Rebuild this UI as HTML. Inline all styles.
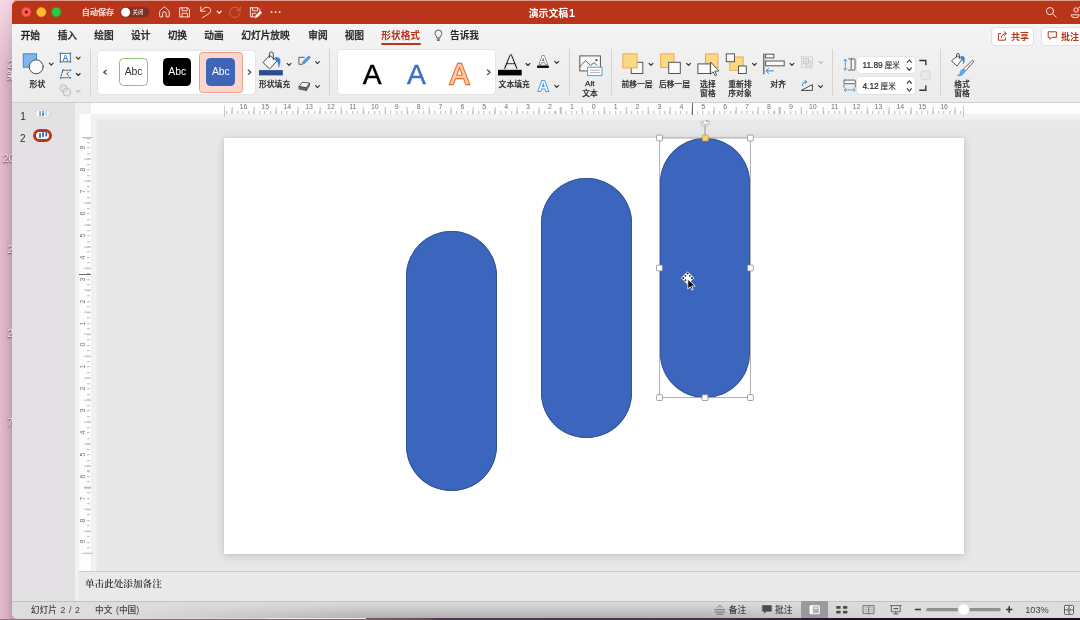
<!DOCTYPE html>
<html lang="zh-CN">
<head>
<meta charset="utf-8">
<title>演示文稿1</title>
<style>
rect{stroke-linejoin:miter}
html,body{margin:0;padding:0}
body{width:1080px;height:620px;overflow:hidden;position:relative;background:#e3b9cb;font-family:"Liberation Sans","Noto Sans CJK SC",sans-serif;color:#262626}
.a{position:absolute}
svg{position:absolute;overflow:visible}
.t{position:absolute;white-space:nowrap;line-height:1}
/* desktop */
#desk{left:0;top:0;width:1080px;height:620px;background:linear-gradient(to right,#e4bacc 0px,#dab2c4 5px,#c8a3b5 11px,#c09bad 12px)}
#deskbottom{left:366px;top:617.7px;width:714px;height:2.3px;background:linear-gradient(to right,#765a62 0,#6a4a54 60px,#4a3850 75px,#43334d 334px,#2a1d33 434px,#1a1022 484px,#150d1c 714px)}
.dl{color:#ebe5e8;font-size:10.2px;text-shadow:0 .6px 1.6px rgba(50,25,40,.85)}
/* window */
#win{will-change:transform;left:0;top:0;width:1080px;height:620px;clip-path:inset(1px -30px 1.3px 12px round 5px);background:#ececec}
#titlebar{left:0;top:0;width:1080px;height:23.5px;background:#b93519}
#tabs{left:0;top:23.5px;width:1080px;height:78px;background:linear-gradient(to bottom,#f4f4f4,#ebebeb)}
#ribbon{left:0;top:47px;width:1080px;height:55px}
#ribbonline{left:0;top:102px;width:1080px;height:1px;background:#cfcfcf}
.tab{font-size:9.7px;font-weight:500;color:#262626;top:30.6px;-webkit-text-stroke-width:.28px}
.lbl{font-size:7.8px;color:#262626;font-weight:500;-webkit-text-stroke-width:.15px}
.sep{width:1px;background:#d4d4d4;top:49px;height:46px}
.gal{background:#fff;border-radius:3px;box-shadow:0 0 0 0.5px #dcdcdc}

.rl{font-size:7px;color:#737373}
.vr{transform:rotate(-90deg);transform-origin:50% 50%}
.shp{background:#3c66bd;border-radius:46px;box-shadow:inset 0 0 0 .8px #2f528f}
#hruler{left:90.6px;top:103px;width:990px;height:11.4px;background:#fdfdfd}
#hticks{left:224.6px;top:103px;width:738.4px;height:11.4px;
 background-image:repeating-linear-gradient(to right,#bdbdbd 0,#bdbdbd 1px,transparent 1px,transparent 21.9px),repeating-linear-gradient(to right,#bdbdbd 0,#bdbdbd 1px,transparent 1px,transparent 5.475px);
 background-size:100% 7px,100% 3.5px;background-position:6.70px 100%,1.23px 100%;background-repeat:repeat-x}
#vruler{left:78.8px;top:114.3px;width:11.8px;height:457px;background:#fdfdfd}
#vticks{left:78.8px;top:138.4px;width:11.8px;height:414.80000000000007px;
 background-image:repeating-linear-gradient(to bottom,#bdbdbd 0,#bdbdbd 1px,transparent 1px,transparent 21.9px),repeating-linear-gradient(to bottom,#bdbdbd 0,#bdbdbd 1px,transparent 1px,transparent 5.475px);
 background-size:7px 100%,3.4px 100%;background-position:100% 20.65px,100% 4.22px;background-repeat:repeat-y}
.st{font-size:8.7px;color:#414141;font-weight:500;top:606.3px;word-spacing:1.2px}
</style>
</head>
<body>
<div class="a" id="desk"></div>
<div class="a" style="left:0;top:0;width:1080px;height:80px;background:linear-gradient(to bottom,rgba(255,226,236,.75) 0,rgba(255,226,236,.55) 18px,rgba(255,226,236,0) 75px)"></div>
<div class="a" style="left:14px;top:0;width:1066px;height:1px;background:#dc9c8e"></div>
<div class="a" style="left:0;top:0;width:40px;height:620px;will-change:transform">
<div class="t dl" style="left:7.7px;top:59.8px">2020</div>
<div class="t dl" style="left:6.3px;top:71.4px">第一</div>
<div class="t dl" style="left:2.8px;top:153.6px">2020</div>
<div class="t dl" style="left:7.8px;top:245.2px">2020</div>
<div class="t dl" style="left:7.6px;top:329px">2020</div>
<div class="t dl" style="left:7.2px;top:417.8px">7月</div>
</div>

<div class="a" id="win">
<!-- TITLEBAR -->
<div class="a" id="titlebar"></div>
<svg style="left:0;top:0" width="1080" height="24" viewBox="0 0 1080 24" fill="none" stroke="#fbe9e4" stroke-width=".95" stroke-linecap="round" stroke-linejoin="round">
<circle cx="26.3" cy="12.1" r="4.7" fill="#fe5f57" stroke="#e2463d" stroke-width=".5"/><circle cx="26.3" cy="12.1" r="1.5" fill="#6e0d08" stroke="none"/>
<circle cx="41.3" cy="12.1" r="4.7" fill="#febc2e" stroke="#e0a028" stroke-width=".5"/>
<circle cx="56.3" cy="12.1" r="4.7" fill="#28c840" stroke="#1fa734" stroke-width=".5"/>
<rect x="120.3" y="7.2" width="29" height="10.2" rx="5.1" fill="#7a3022" stroke="none"/>
<circle cx="125.6" cy="12.3" r="4.5" fill="#fff" stroke="none"/>
<path d="M159.6 11.9 C159.6 11.2 160 10.8 160.4 10.4 L163.6 7.3 a1.1 1.1 0 0 1 1.6 0 L168.4 10.4 C168.8 10.8 169.2 11.2 169.2 11.9 V16.2 a.7 .7 0 0 1 -.7 .7 H166.2 V13.6 a1.8 1.8 0 0 0 -3.6 0 V16.9 H160.3 a.7 .7 0 0 1 -.7 -.7 Z"/>
<path d="M180 7.8 h7.6 l1.9 1.9 v7.2 h-9.5 z M182.2 7.8 v3 h5 v-3 M182 16.9 v-3.6 h5.6 v3.6"/>
<path d="M200.8 6.9 V11.2 H205.2 M201 11.1 C203 7.4 207 6.4 209.4 8 C211.4 9.500 211 12.1 209 13.600 L202.6 17.6"/>
<path d="M217.3 11.3 L219.2 13.3 L221.1 11.3" stroke-width="1.3"/>
<g opacity=".32"><path d="M239.6 10.2 A5.2 5.2 0 1 0 240 13.2 M240.2 6.8 V10.4 H236.6"/></g>
<path d="M250.4 7.8 h7.6 l1.9 1.9 v2.2 M250.4 7.8 v9.1 h4.2 M252.6 7.8 v3 h5 v-3 M252.4 16.9 v-3.6 h3.4"/>
<path d="M255.3 17.6 l.6 -2.2 l4.2 -4.2 l1.6 1.6 l-4.2 4.2 z" fill="#fff" stroke-width=".6"/>
<g fill="#fff" stroke="none"><circle cx="271.6" cy="12.1" r=".95"/><circle cx="275.6" cy="12.1" r=".95"/><circle cx="279.6" cy="12.1" r=".95"/></g>
<circle cx="1050" cy="11.1" r="3.6"/><path d="M1052.7 13.8 L1056.3 17.2"/>
<circle cx="1076" cy="10" r="2.2"/><path d="M1071.2 15.2 a4 2.6 0 0 0 8 0 z M1078.2 8.2 a2 2 0 0 1 1.8 -1.4"/>
</svg>
<div class="t" style="left:81.8px;top:8.6px;font-size:8.1px;font-weight:500;color:#fae3dd;-webkit-text-stroke:.2px #fae3dd">自动保存</div>
<div class="t" style="left:132.6px;top:9.6px;font-size:5.3px;font-weight:500;color:#f3dcd6">关闭</div>
<div class="t" style="left:528.7px;top:7.6px;font-size:9.9px;font-weight:700;color:#fff">演示文稿<span style="font-size:10.8px;margin-left:.8px">1</span></div>
<!-- TABS -->
<div class="a" id="tabs"></div>
<div class="t tab" style="left:20.7px">开始</div>
<div class="t tab" style="left:57.7px">插入</div>
<div class="t tab" style="left:94.3px">绘图</div>
<div class="t tab" style="left:131px">设计</div>
<div class="t tab" style="left:167.7px">切换</div>
<div class="t tab" style="left:204.3px">动画</div>
<div class="t tab" style="left:241.3px">幻灯片放映</div>
<div class="t tab" style="left:308.3px">审阅</div>
<div class="t tab" style="left:344.7px">视图</div>
<div class="t tab" style="left:381.3px;color:#b7361a;font-weight:700;-webkit-text-stroke-width:0">形状格式</div>
<div class="a" style="left:381.3px;top:43px;width:39.7px;height:2px;background:#b93519;border-radius:1px"></div>
<svg style="left:0;top:24px" width="1080" height="24" viewBox="0 24 1080 24" fill="none" stroke="#4a4a4a" stroke-width=".9" stroke-linecap="round" stroke-linejoin="round">
<path d="M436.9 37.6 c0 -1.4 -1.9 -2 -1.9 -4.2 a3.4 3.4 0 0 1 6.8 0 c0 2.2 -1.9 2.8 -1.9 4.2 z M437.1 39.2 h2.6 M437.6 40.5 h1.6"/>
</svg>
<div class="t tab" style="left:450px;font-weight:700;-webkit-text-stroke-width:0">告诉我</div>
<div class="a" style="left:991.7px;top:27.7px;width:41.5px;height:17px;background:#fff;border-radius:3px;box-shadow:0 0 0 .6px #d2d2d2"></div>
<div class="a" style="left:1041.7px;top:27.7px;width:50px;height:17px;background:#fff;border-radius:3px;box-shadow:0 0 0 .6px #d2d2d2"></div>
<svg style="left:0;top:24px" width="1080" height="24" viewBox="0 24 1080 24" fill="none" stroke="#b7361a" stroke-width="1" stroke-linecap="round" stroke-linejoin="round">
<path d="M1000.6 33.6 h-2.2 v6.6 h7 v-2.4 M1001.4 37.4 c.2 -2.6 1.8 -3.8 4.2 -3.8 M1004.2 31.6 l2.2 2 l-2.2 2"/>
<path d="M1048.6 31.8 h7.8 v5.6 h-4.4 l-2 2 v-2 h-1.4 z"/>
</svg>
<div class="t" style="left:1011px;top:33.3px;font-size:9px;font-weight:700;color:#b7361a">共享</div>
<div class="t" style="left:1061px;top:33.3px;font-size:9px;font-weight:700;color:#b7361a">批注</div>
<!-- RIBBON -->
<div class="a" id="ribbon"></div>
<div class="a sep" style="left:90px"></div>
<div class="a sep" style="left:329px"></div>
<div class="a sep" style="left:568.5px"></div>
<div class="a sep" style="left:611px"></div>
<div class="a sep" style="left:832px"></div>
<div class="a sep" style="left:940.3px"></div>
<div class="a gal" style="left:98.4px;top:50.7px;width:156.9px;height:43.1px"></div>
<div class="a gal" style="left:337.7px;top:50.4px;width:157.3px;height:43.3px"></div>
<div class="a" style="left:199.2px;top:52.1px;width:42px;height:39.2px;background:#fbd6cd;border:1px solid #ec9d8b;border-radius:3.5px;box-sizing:content-box"></div>
<div class="a" style="left:119.1px;top:57.8px;width:27px;height:26.6px;border:1px solid #90bf80;border-radius:4.5px;background:#fff"></div>
<div class="a" style="left:162.9px;top:57.8px;width:28.6px;height:28.6px;border-radius:4.5px;background:#000"></div>
<div class="a" style="left:206.4px;top:57.8px;width:28.9px;height:28.6px;border-radius:4.5px;background:#3f65b9"></div>
<div class="t" style="left:119.1px;width:29px;text-align:center;top:66.9px;font-size:10.4px;color:#333">Abc</div>
<div class="t" style="left:162.9px;width:28.6px;text-align:center;top:66.9px;font-size:10.4px;color:#fff">Abc</div>
<div class="t" style="left:206.4px;width:28.9px;text-align:center;top:66.9px;font-size:10.4px;color:#fff">Abc</div>
<div class="t" style="left:362.7px;top:60px;font-size:28.2px;color:#000;-webkit-text-stroke:.45px #000">A</div>
<div class="t" style="left:406.9px;top:60px;font-size:28.2px;color:#3f6fc6;-webkit-text-stroke:.45px #3f6fc6">A</div>
<div class="t" style="left:450px;top:60px;font-size:28.6px;color:#f9cdb0;-webkit-text-stroke:2.3px #e8722c;paint-order:stroke fill">A</div>
<svg style="left:0;top:44px;z-index:2" width="1080" height="60" viewBox="0 44 1080 60" fill="none" stroke="#4a4a4a" stroke-width="1" stroke-linecap="round" stroke-linejoin="round">
<path d="M49.35 63.20 l1.9 2 l1.9 -2" stroke="#333" stroke-width="1.15"/>
<path d="M76.35 57.20 l1.9 2 l1.9 -2" stroke="#333" stroke-width="1.15"/>
<path d="M76.35 73.50 l1.9 2 l1.9 -2" stroke="#333" stroke-width="1.15"/>
<path d="M287.15 63.40 l1.9 2 l1.9 -2" stroke="#333" stroke-width="1.15"/>
<path d="M315.55 61.60 l1.9 2 l1.9 -2" stroke="#333" stroke-width="1.15"/>
<path d="M315.55 85.70 l1.9 2 l1.9 -2" stroke="#333" stroke-width="1.15"/>
<path d="M526.05 63.50 l1.9 2 l1.9 -2" stroke="#333" stroke-width="1.15"/>
<path d="M554.75 61.40 l1.9 2 l1.9 -2" stroke="#333" stroke-width="1.15"/>
<path d="M554.75 85.40 l1.9 2 l1.9 -2" stroke="#333" stroke-width="1.15"/>
<path d="M649.05 63.40 l1.9 2 l1.9 -2" stroke="#333" stroke-width="1.15"/>
<path d="M686.65 63.40 l1.9 2 l1.9 -2" stroke="#333" stroke-width="1.15"/>
<path d="M752.55 63.40 l1.9 2 l1.9 -2" stroke="#333" stroke-width="1.15"/>
<path d="M790.05 63.40 l1.9 2 l1.9 -2" stroke="#333" stroke-width="1.15"/>
<path d="M818.65 85.70 l1.9 2 l1.9 -2" stroke="#333" stroke-width="1.15"/>
<path d="M76.35 90.10 l1.9 2 l1.9 -2" stroke="#bdbdbd" stroke-width="1.15"/>
<path d="M818.95 61.40 l1.9 2 l1.9 -2" stroke="#bdbdbd" stroke-width="1.15"/>
<!-- shapes -->
<rect x="23.3" y="53.8" width="13.2" height="13.4" fill="#7db7ee" stroke="#3e8ad8"/>
<circle cx="36.2" cy="66.8" r="7" fill="#f9f9f9" stroke="#4d4d4d"/>
<!-- text box -->
<rect x="60.4" y="53.4" width="10" height="8.4" fill="#fff" stroke="#6a6a6a"/>
<g fill="#2f8de0" stroke="none"><circle cx="60.4" cy="53.4" r="1"/><circle cx="70.4" cy="53.4" r="1"/><circle cx="60.4" cy="61.8" r="1"/><circle cx="70.4" cy="61.8" r="1"/></g>
<text x="65.4" y="60.800" font-size="8.2" font-weight="700" fill="#2f8de0" stroke="none" text-anchor="middle" font-family="Liberation Sans, sans-serif">A</text>
<!-- edit shape -->
<path d="M63.2 70.3 H70.3" stroke-dasharray="1.6 1.4" stroke="#555"/>
<path d="M62.6 71.2 L60.8 76.6" stroke-dasharray="1.8 1.3" stroke="#555"/>
<path d="M68.6 72.2 L66.6 74 L68.8 75.8" stroke="#555" stroke-width=".9"/>
<path d="M61 77.7 H70" stroke="#888" stroke-width="1.2"/>
<g fill="#2f8de0" stroke="none"><circle cx="63.1" cy="70.3" r="1"/><circle cx="70.3" cy="70.3" r="1"/><circle cx="60.6" cy="77.7" r="1"/><circle cx="70.3" cy="77.7" r="1"/></g>
<!-- merge (dim) -->
<circle cx="63.4" cy="88.3" r="3.6" fill="#e4e4e4" stroke="#bdbdbd"/><circle cx="66.8" cy="92.2" r="3.8" fill="#e4e4e4" fill-opacity=".7" stroke="#bdbdbd"/>
<!-- gallery arrows -->
<path d="M106.3 70.3 L103.7 72.2 L106.3 74.1" stroke="#444" stroke-width="1.2"/>
<path d="M248.2 70 L250.8 72.2 L248.2 74.4" stroke="#444" stroke-width="1.2"/>
<path d="M487.4 70 L490.2 72.3 L487.4 74.6" stroke="#444" stroke-width="1.2"/>
<!-- shape fill bucket -->
<path d="M263.3 62.2 L269.7 55.5 L277 60.800 L269.900 68.7 Z" fill="#fcfcfc" stroke="#444" stroke-width=".95"/>
<path d="M269.4 57.600 V53.900 a1.950 1.950 0 0 1 3.900 0 V59.800" stroke="#444" stroke-width=".95"/>
<path d="M274.4 58.100 c1.600 -1.700 4.800 -1 5.600 1.300 c.6 2.200 -.2 5.400 -1.300 8 c-.100 -2.800 -.6 -5 -1.700 -6.500 z" fill="#2f86d6" stroke="#2f86d6" stroke-width=".4"/>
<rect x="259" y="70.1" width="23.8" height="5.3" fill="#2f4c90" stroke="none"/>
<!-- shape outline -->
<path d="M304.400 57.300 H298.900 V64.300 H302" stroke="#5a5a5a" stroke-width=".95"/>
<path d="M298.600 66.700 H309.400" stroke="#dedede" stroke-width=".8"/>
<path d="M302.300 63.900 l.5 -2.300 l5.300 -5.100 a1.250 1.250 0 0 1 1.800 1.800 l-5.300 5.100 z" fill="#4a9cec" stroke="#2f86d6" stroke-width=".6"/>
<!-- shape effects -->
<path d="M299.200 86.500 L302.200 82.300 L309.600 83.100 L306.600 87.600 Z" fill="#fbfbfb" stroke="#444" stroke-width=".9"/>
<path d="M299.200 86.500 L306.600 87.600 L306.400 90.500 L299.400 89.200 Z" fill="#6a6a6a" stroke="#444" stroke-width=".7"/>
<path d="M306.600 87.600 L309.600 83.100 L309.400 85.900 L306.400 90.500 Z" fill="#8c8c8c" stroke="#444" stroke-width=".7"/>
<!-- text fill -->
<rect x="498" y="69.8" width="23.7" height="5.6" fill="#000" stroke="none"/>
<!-- text outline -->
<rect x="537.1" y="65.5" width="11.7" height="2.4" fill="#000" stroke="none"/>
<!-- alt text -->
<rect x="579.8" y="55.9" width="20.6" height="15" stroke="#555" fill="#f8f8f8"/>
<path d="M580 66.6 L585.4 60.6 L590.6 65.6 L594 62.6 L597 65.2" stroke="#555" stroke-width=".9"/>
<circle cx="596.4" cy="60.2" r="1.1" fill="#444" stroke="none"/>
<rect x="587.6" y="67.2" width="14.4" height="8.4" fill="#fff" stroke="#4aa3df"/>
<path d="M590.4 70.2 H599.4 M590.4 72.6 H599.4" stroke="#9a9a9a" stroke-width=".8"/>
<!-- bring forward -->
<rect x="631.2" y="62.3" width="11.6" height="11.2" fill="#fafafa" stroke="#555"/>
<rect x="622.9" y="53.9" width="14.2" height="14" fill="#fbd983" stroke="#f2a74e"/>
<!-- send backward -->
<rect x="660.6" y="53.9" width="13.4" height="13.6" fill="#fbd983" stroke="#f2a74e"/>
<rect x="668.7" y="62.3" width="11.6" height="11.2" fill="#fafafa" stroke="#555"/>
<!-- selection pane -->
<rect x="705.5" y="53.9" width="12.4" height="13.6" fill="#fbd983" stroke="#f2a74e"/>
<rect x="697.9" y="63.9" width="12.4" height="9.6" fill="#fafafa" stroke="#555"/>
<path d="M710.6 62.4 V74.2 L713.2 71.8 L715 75.6 L716.6 74.9 L714.9 71.2 L718.6 70.9 Z" fill="#fff" stroke="#444" stroke-width=".9"/>
<!-- reorder -->
<rect x="729.8" y="57" width="13.4" height="13.3" fill="#fbd983" stroke="#f2a74e"/>
<rect x="726.3" y="53.9" width="8.2" height="7.8" fill="#fafafa" stroke="#555"/>
<rect x="738.5" y="66" width="7.8" height="7.5" fill="#fafafa" stroke="#555"/>
<!-- align -->
<path d="M763.8 53.8 V73.8" stroke="#555" stroke-width="1.2"/>
<rect x="765.6" y="54.2" width="8.2" height="3.7" fill="#fafafa" stroke="#555"/>
<rect x="765.6" y="61" width="18.6" height="4.8" fill="#fafafa" stroke="#555"/>
<path d="M773.4 70.9 H766.2 M768.6 68.4 L766 70.9 L768.6 73.4" stroke="#2f8de0"/>
<!-- group (dim) -->
<rect x="801.6" y="56.8" width="10.8" height="11" stroke="#c4c4c4" stroke-dasharray="1.6 1.6" stroke-width=".9"/>
<rect x="803.6" y="58.8" width="5" height="5" stroke="#c4c4c4" stroke-width=".9"/><rect x="805.8" y="61" width="5" height="5" stroke="#c4c4c4" stroke-width=".9"/>
<!-- rotate -->
<path d="M801.6 90.4 H812.4 V85 Z" stroke="#444" fill="#f6f6f6"/>
<path d="M802.4 85.6 C802.2 83 804 81.6 806.6 81.9 M805 80.4 L806.8 81.9 L805.2 83.6" stroke="#2f8de0"/>
<!-- height -->
<path d="M845.3 60.4 V69" stroke="#2f8de0" stroke-width=".9" stroke-dasharray="1.6 1.1"/>
<path d="M843.8 60.800 L845.3 59.1 L846.8 60.800 M843.8 68.7 L845.3 70.4 L846.8 68.7" stroke="#2f8de0" stroke-width=".9"/>
<rect x="851.2" y="58.9" width="3.8" height="11.2" rx=".5" stroke="#505050" stroke-width=".9" fill="#fafafa"/>
<path d="M848.6 58.9 H850.6 M848.6 70.1 H850.6" stroke="#555" stroke-width=".9"/>
<!-- width -->
<rect x="844" y="80.100" width="11.3" height="3.6" rx=".5" stroke="#505050" stroke-width=".9" fill="#fafafa"/>
<path d="M844 84.6 V87.2 M855.3 84.6 V87.2" stroke="#666" stroke-width=".9" stroke-dasharray="1 .8"/>
<path d="M845.6 89.9 H853.8" stroke="#2f8de0" stroke-width=".9" stroke-dasharray="1.6 1.1"/>
<path d="M845.8 88.4 L844.1 89.9 L845.8 91.4 M853.6 88.4 L855.3 89.9 L853.6 91.4" stroke="#2f8de0" stroke-width=".9"/>
<!-- steppers -->
<path d="M907.2 62.5 l2.1 -2.5 l2.1 2.5 M907.2 67.9 l2.1 2.5 l2.1 -2.5 M907.2 83.4 l2.1 -2.5 l2.1 2.5 M907.2 88.7 l2.1 2.5 l2.1 -2.5" stroke="#3a3a3a" stroke-width="1.1"/>
<!-- lock -->
<path d="M919.3 60.5 H925.8 V65.2 M919.3 90.2 H925.8 V85.4" stroke="#333" stroke-width="1.4" stroke-linecap="butt" stroke-linejoin="miter"/>
<rect x="920.8" y="70.9" width="9.4" height="8.8" rx="2" fill="#e9e9e9" stroke="#d2d2d2" stroke-width=".8"/>
<!-- format pane -->
<path d="M951.800 60.600 L957.200 55.900 L962.200 59 L957.300 65.700 Z" fill="#fcfcfc" stroke="#444" stroke-width=".9"/>
<path d="M956.500 57.400 V54.900 a1.450 1.450 0 0 1 2.900 0 V58.400" stroke="#444" stroke-width=".9"/>
<path d="M960.600 56.600 c1.300 -1.100 3.400 -.4 3.800 1.500 c.4 1.800 -.2 4.100 -1 5.900 c-.100 -2.100 -.5 -3.700 -1.300 -4.800 z" fill="#2f86d6" stroke="#2f86d6" stroke-width=".4"/>
<path d="M973.6 61.6 a.9 .9 0 0 0 -1.4 -1 L963.4 69 L965 70.8 Z" fill="#fafafa" stroke="#555" stroke-width=".9"/>
<path d="M963.2 69.2 c-1.8 .2 -2.6 1.4 -2.8 3 c-.2 1.600 -1.400 2.800 -2.800 3.400 c2.600 .800 6.200 -.600 7.400 -4.600 z" fill="#5aaaf0" stroke="#2f8de0" stroke-width=".6"/>
</svg>
<div class="t" style="left:503.3px;top:50.6px;font-size:22.4px;color:#111;-webkit-text-stroke:.7px #eeeeee;paint-order:fill stroke">A</div>
<div class="t" style="left:539.1px;top:54.9px;font-size:11.8px;font-weight:700;color:#fafafa;-webkit-text-stroke:1px #3a3a3a;paint-order:stroke fill">A</div>
<div class="t" style="left:537.9px;top:78.6px;font-size:14.6px;font-weight:700;color:#f2f8fe;-webkit-text-stroke:1.5px #2f86d6;paint-order:stroke fill">A</div>
<div class="t lbl" style="left:29.6px;top:80.6px">形状</div>
<div class="t lbl" style="left:259px;top:80.9px">形状填充</div>
<div class="t lbl" style="left:498.6px;top:80.9px">文本填充</div>
<div class="t lbl" style="left:585px;top:80.3px;font-size:8.1px;-webkit-text-stroke:.25px #2b2b2b">Alt</div>
<div class="t lbl" style="left:582.2px;top:89.75px">文本</div>
<div class="t lbl" style="left:621.4px;top:80.9px">前移一层</div>
<div class="t lbl" style="left:658.9px;top:80.9px">后移一层</div>
<div class="t lbl" style="left:700.1px;top:80.9px">选择</div>
<div class="t lbl" style="left:700.1px;top:89.75px">窗格</div>
<div class="t lbl" style="left:728.3px;top:80.9px">重新排</div>
<div class="t lbl" style="left:728.3px;top:89.75px">序对象</div>
<div class="t lbl" style="left:770.3px;top:80.9px">对齐</div>
<div class="t lbl" style="left:954.2px;top:80.9px">格式</div>
<div class="t lbl" style="left:954.2px;top:89.75px">窗格</div>
<div class="a" style="left:857.4px;top:56.5px;width:57.3px;height:16.6px;background:#fff;border-radius:3px;box-shadow:0 0 0 .5px #d8d8d8"></div>
<div class="a" style="left:857.4px;top:77.4px;width:57.3px;height:16.8px;background:#fff;border-radius:3px;box-shadow:0 0 0 .5px #d8d8d8"></div>
<div class="t" style="left:862.4px;top:60.9px;font-size:8.4px;color:#262626;-webkit-text-stroke-width:.2px">11.89<span style="font-size:7.6px;margin-left:1.9px;-webkit-text-stroke-width:.1px">厘米</span></div>
<div class="t" style="left:862.4px;top:81.9px;font-size:8.4px;color:#262626;-webkit-text-stroke-width:.2px">4.12<span style="font-size:7.6px;margin-left:1.9px;-webkit-text-stroke-width:.1px">厘米</span></div>
<div class="a" id="ribbonline"></div>
<!-- MAIN -->
<div class="a" style="left:0;top:103px;width:75px;height:498px;background:#e3e1e3"></div>
<div class="a" style="left:75px;top:103px;width:4px;height:498px;background:linear-gradient(to right,#ededed,#f4f4f4 60%,#e6e6e6)"></div>
<div class="a" style="left:79px;top:103px;width:1001px;height:468.5px;background:#f1f1f1"></div>
<div class="a" style="left:98px;top:121.3px;width:990px;height:451px;background:#e8e8e8;box-shadow:0 0 1.5px .6px #e8e8e8"></div>
<!-- rulers -->
<div class="a" id="hruler"></div>
<div class="a" id="vruler"></div>
<div class="a" id="hticks"></div>
<div class="a" id="vticks"></div>
<div class="a" style="left:79px;top:103px;width:11.6px;height:11.3px;background:#f0f0f0"></div>
<div class="a" style="left:223.6px;top:105.5px;width:1px;height:11.2px;background:#c9c9c9"></div>
<div class="a" style="left:963.2px;top:105.5px;width:1px;height:11.2px;background:#c9c9c9"></div>
<div class="a" style="left:82px;top:137.4px;width:11px;height:1px;background:#c9c9c9"></div>
<div class="a" style="left:82px;top:553.2px;width:11px;height:1px;background:#c9c9c9"></div>
<div class="a" style="left:691.8px;top:103px;width:1.2px;height:11.8px;background:#6a6a6a"></div>
<div class="a" style="left:79px;top:273.6px;width:11.8px;height:1.2px;background:#6a6a6a"></div>
<span class="t rl" style="left:237.4px;top:102.6px;width:12px;text-align:center">16</span><span class="t rl" style="left:259.2px;top:102.6px;width:12px;text-align:center">15</span><span class="t rl" style="left:281.2px;top:102.6px;width:12px;text-align:center">14</span><span class="t rl" style="left:303.1px;top:102.6px;width:12px;text-align:center">13</span><span class="t rl" style="left:325.0px;top:102.6px;width:12px;text-align:center">12</span><span class="t rl" style="left:346.9px;top:102.6px;width:12px;text-align:center">11</span><span class="t rl" style="left:368.8px;top:102.6px;width:12px;text-align:center">10</span><span class="t rl" style="left:390.6px;top:102.6px;width:12px;text-align:center">9</span><span class="t rl" style="left:412.6px;top:102.6px;width:12px;text-align:center">8</span><span class="t rl" style="left:434.5px;top:102.6px;width:12px;text-align:center">7</span><span class="t rl" style="left:456.4px;top:102.6px;width:12px;text-align:center">6</span><span class="t rl" style="left:478.2px;top:102.6px;width:12px;text-align:center">5</span><span class="t rl" style="left:500.1px;top:102.6px;width:12px;text-align:center">4</span><span class="t rl" style="left:522.0px;top:102.6px;width:12px;text-align:center">3</span><span class="t rl" style="left:544.0px;top:102.6px;width:12px;text-align:center">2</span><span class="t rl" style="left:565.9px;top:102.6px;width:12px;text-align:center">1</span><span class="t rl" style="left:587.8px;top:102.6px;width:12px;text-align:center">0</span><span class="t rl" style="left:609.6px;top:102.6px;width:12px;text-align:center">1</span><span class="t rl" style="left:631.5px;top:102.6px;width:12px;text-align:center">2</span><span class="t rl" style="left:653.5px;top:102.6px;width:12px;text-align:center">3</span><span class="t rl" style="left:675.4px;top:102.6px;width:12px;text-align:center">4</span><span class="t rl" style="left:697.2px;top:102.6px;width:12px;text-align:center">5</span><span class="t rl" style="left:719.1px;top:102.6px;width:12px;text-align:center">6</span><span class="t rl" style="left:741.0px;top:102.6px;width:12px;text-align:center">7</span><span class="t rl" style="left:763.0px;top:102.6px;width:12px;text-align:center">8</span><span class="t rl" style="left:784.9px;top:102.6px;width:12px;text-align:center">9</span><span class="t rl" style="left:806.8px;top:102.6px;width:12px;text-align:center">10</span><span class="t rl" style="left:828.6px;top:102.6px;width:12px;text-align:center">11</span><span class="t rl" style="left:850.5px;top:102.6px;width:12px;text-align:center">12</span><span class="t rl" style="left:872.5px;top:102.6px;width:12px;text-align:center">13</span><span class="t rl" style="left:894.3px;top:102.6px;width:12px;text-align:center">14</span><span class="t rl" style="left:916.2px;top:102.6px;width:12px;text-align:center">15</span><span class="t rl" style="left:938.1px;top:102.6px;width:12px;text-align:center">16</span>
<span class="t rl vr" style="left:75.6px;top:144.2px;width:12px;text-align:center">9</span><span class="t rl vr" style="left:75.6px;top:166.2px;width:12px;text-align:center">8</span><span class="t rl vr" style="left:75.6px;top:188.1px;width:12px;text-align:center">7</span><span class="t rl vr" style="left:75.6px;top:210.0px;width:12px;text-align:center">6</span><span class="t rl vr" style="left:75.6px;top:231.8px;width:12px;text-align:center">5</span><span class="t rl vr" style="left:75.6px;top:253.8px;width:12px;text-align:center">4</span><span class="t rl vr" style="left:75.6px;top:275.7px;width:12px;text-align:center">3</span><span class="t rl vr" style="left:75.6px;top:297.6px;width:12px;text-align:center">2</span><span class="t rl vr" style="left:75.6px;top:319.5px;width:12px;text-align:center">1</span><span class="t rl vr" style="left:75.6px;top:341.4px;width:12px;text-align:center">0</span><span class="t rl vr" style="left:75.6px;top:363.2px;width:12px;text-align:center">1</span><span class="t rl vr" style="left:75.6px;top:385.2px;width:12px;text-align:center">2</span><span class="t rl vr" style="left:75.6px;top:407.1px;width:12px;text-align:center">3</span><span class="t rl vr" style="left:75.6px;top:428.9px;width:12px;text-align:center">4</span><span class="t rl vr" style="left:75.6px;top:450.9px;width:12px;text-align:center">5</span><span class="t rl vr" style="left:75.6px;top:472.8px;width:12px;text-align:center">6</span><span class="t rl vr" style="left:75.6px;top:494.7px;width:12px;text-align:center">7</span><span class="t rl vr" style="left:75.6px;top:516.5px;width:12px;text-align:center">8</span><span class="t rl vr" style="left:75.6px;top:538.4px;width:12px;text-align:center">9</span>
<!-- slide -->
<div class="a" style="left:224px;top:138px;width:740.2px;height:415.7px;background:#fff;box-shadow:0 2px 9px 1px rgba(0,0,0,.13),0 0 2px rgba(0,0,0,.08)"></div>
<div class="a shp" style="left:406px;top:231.2px;width:91px;height:260.2px"></div>
<div class="a shp" style="left:540.7px;top:178.4px;width:91px;height:260px"></div>
<div class="a shp" style="left:659.8px;top:137.8px;width:90.4px;height:259.8px"></div>
<!-- selection -->
<svg style="left:0;top:100px" width="1080" height="320" viewBox="0 100 1080 320" fill="none" stroke="#9a9a9a" stroke-width="1">
<rect x="659.6" y="138" width="90.8" height="259.6" stroke="#a6a6a6" stroke-width=".9"/>
<path d="M705 126.6 V135" stroke="#8a8a8a" stroke-width=".9"/>
<clipPath id="cv"><rect x="90" y="120.3" width="1000" height="460"/></clipPath><g clip-path="url(#cv)"><circle cx="705" cy="122.4" r="4.1" fill="#fdfdfd" stroke="#a0a0a0" stroke-width=".7"/>
<path d="M707.2 121.2 a2.4 2.4 0 1 0 .2 2.2 M707.6 119.8 v1.6 h-1.6" stroke="#777" stroke-width=".7"/></g>
<g fill="#fff" stroke="#8c8c8c" stroke-width=".8">
<rect x="656.7" y="135.1" width="5.8" height="5.8" rx=".8"/><rect x="747.5" y="135.1" width="5.8" height="5.8" rx=".8"/>
<rect x="656.5" y="265.1" width="5.8" height="5.8" rx=".8"/><rect x="747.5" y="265.1" width="5.8" height="5.8" rx=".8"/>
<rect x="656.7" y="394.7" width="5.8" height="5.8" rx=".8"/><rect x="702.1" y="394.7" width="5.8" height="5.8" rx=".8"/><rect x="747.5" y="394.7" width="5.8" height="5.8" rx=".8"/>
</g>
<rect x="702.5" y="135.1" width="5.8" height="5.8" rx=".6" fill="#f8d56a" stroke="#c9a23c" stroke-width=".8"/>
<!-- cursor -->
<g transform="translate(687.6 278)">
<path d="M0 -6.6 L6.6 0 L0 6.6 L-6.6 0 Z" fill="#fff" stroke="none"/>
<g fill="#222" stroke="none"><circle cx="0" cy="-4.4" r="1"/><circle cx="-4.4" cy="0" r="1"/><circle cx="4.4" cy="0" r="1"/><circle cx="-2.2" cy="-2.2" r=".9"/><circle cx="2.2" cy="-2.2" r=".9"/><circle cx="-2.2" cy="2.2" r=".9"/></g>
<path d="M.2 1.2 V11 L2.6 8.8 L4.2 12 L5.6 11.4 L4.1 8.2 L7.6 8 Z" fill="#111" stroke="#fff" stroke-width=".8"/>
</g>
</svg>
<!-- thumbnails -->
<div class="t" style="left:20.3px;top:111.5px;font-size:10px;color:#2b2b2b">1</div>
<div class="t" style="left:20px;top:133.5px;font-size:10px;color:#2b2b2b">2</div>
<div class="a" style="left:35.7px;top:109.7px;width:13.5px;height:7.8px;border-radius:4px;background:#fcfcfc;box-shadow:0 0 1.2px rgba(0,0,0,.22)"></div>
<div class="a" style="left:33.3px;top:128.8px;width:12.8px;height:7.3px;border:3px solid #b7381c;border-radius:6.8px;background:#fff"></div>
<svg style="left:30px;top:105px" width="30" height="40" viewBox="30 105 30 40" stroke="none">
<rect x="39.4" y="111" width="1.4" height="5" fill="#4f8fdc"/><rect x="42.4" y="110.4" width="1.4" height="6" fill="#4a86d8"/><rect x="45.500" y="110.4" width="1.4" height="5.600" fill="#9cc4ee"/><rect x="42.500" y="113.6" width="1.300" height="1.500" fill="#3f5a24"/><rect x="39.4" y="115.8" width="1.4" height=".9" fill="#e0b93e"/><rect x="45.500" y="115.600" width="1.400" height=".7" fill="#e8c9a0"/>
<rect x="39.100" y="133.100" width="1.800" height="5.100" rx=".8" fill="#3f65b9"/><rect x="42.100" y="132.100" width="1.800" height="5.100" rx=".8" fill="#3f65b9"/><rect x="45.400" y="131.700" width="1.800" height="4.800" rx=".8" fill="#3f65b9"/>
</svg>
<!-- notes -->
<div class="a" style="left:79px;top:571.3px;width:1001px;height:30px;background:#e9e9e9;border-top:1px solid #cdcdcd"></div>
<div class="t" style="left:85px;top:578.8px;font-size:9.6px;font-weight:600;color:#2a2a2a;font-family:'Liberation Serif','Noto Serif CJK SC',serif">单击此处添加备注</div>
<!-- STATUS -->
<div class="a" style="left:0;top:601px;width:1080px;height:17px;background:#dedddd;border-top:1px solid #c2c1c2;box-sizing:border-box"></div>
<div class="a" style="left:120px;top:602px;width:780px;height:16px;background:linear-gradient(to bottom,rgba(0,0,0,0),rgba(0,0,0,.2));-webkit-mask-image:linear-gradient(to right,transparent 0,#000 250px,#000 580px,transparent 100%);mask-image:linear-gradient(to right,transparent 0,#000 250px,#000 580px,transparent 100%)"></div>
<div class="a" style="left:800.9px;top:601px;width:27.2px;height:17px;background:#9b999b"></div>
<div class="t st" style="left:30.8px">幻灯片 2 / 2</div>
<div class="t st" style="left:95px">中文 (中国)</div>
<div class="t st" style="left:728.7px">备注</div>
<div class="t st" style="left:775px">批注</div>
<div class="t st" style="left:1025.2px;font-size:9.2px;top:606px">103%</div>
<svg style="left:0;top:600px" width="1080" height="20" viewBox="0 600 1080 20" fill="none" stroke="#555" stroke-width="1" stroke-linecap="round" stroke-linejoin="round">
<path d="M715 609.6 H724.8 M715 612 H724.8 M716.8 614.2 H723 M718 607.4 L719.9 605.4 L721.8 607.4" stroke="#666" stroke-width=".9"/>
<path d="M762.6 605.6 h8.8 v5.6 h-5 l-2 2 v-2 h-1.800 z" fill="#4a4a4a" stroke="#4a4a4a" stroke-width=".6"/>
<rect x="809.6" y="605.2" width="10.2" height="9" rx="1" fill="#fff" stroke="none"/>
<rect x="812.7" y="606.3" width="6.100" height="7" fill="#b4b3b4" stroke="none"/><rect x="814" y="607.6" width="3.600" height="1.100" fill="#fff" stroke="none"/>
<g fill="#4a4a4a" stroke="none"><rect x="836.3" y="605.9" width="4.300" height="2.800" rx=".5"/><rect x="843" y="605.9" width="4.300" height="2.800" rx=".5"/><rect x="836.3" y="610.700" width="4.300" height="2.800" rx=".5"/><rect x="843" y="610.700" width="4.300" height="2.800" rx=".5"/></g>
<path d="M863.4 605.6 h4.800 l.5 .5 l.5 -.5 h4.800 v8 h-4.800 l-.5 .5 l-.5 -.5 h-4.800 z M868.7 606.2 v7.800" stroke="#5a5a5a" stroke-width=".8"/>
<path d="M864.8 607.6 h2.600 M864.8 609.4 h2.600 M864.8 611.2 h2.600 M870 607.6 h2.600 M870 609.4 h2.600 M870 611.2 h2.600" stroke="#8a8a8a" stroke-width=".5"/>
<path d="M890.4 605.6 H901.2 M891.4 605.800 V611.8 H900.2 V605.800 M895.8 611.8 V613.6 M893.600 614 H898" stroke="#5a5a5a" stroke-width=".9"/>
<path d="M894 608.6 h3.600" stroke="#5a5a5a" stroke-width="1.4"/>
<path d="M915 609.5 H921" stroke="#3a3a3a" stroke-width="1.6" stroke-linecap="butt"/>
<path d="M1006 609.5 H1012.4 M1009.2 606.3 V612.7" stroke="#3a3a3a" stroke-width="1.6" stroke-linecap="butt"/>
<path d="M927.8 609.7 H999.2" stroke="#929192" stroke-width="3.2"/>
<circle cx="963.7" cy="609.5" r="5.7" fill="#fff" stroke="#d0d0d0" stroke-width=".5"/>
<rect x="1064.5" y="605.4" width="9" height="9" rx=".8" fill="#f4f4f4" stroke="#5c5c5c" stroke-width="1"/>
<path d="M1069 606 V614 M1065 609.9 H1073" stroke="#6a6a6a" stroke-width="1.3"/>
<path d="M1066.300 607.2 l1.4 1.4 M1071.700 607.2 l-1.4 1.4 M1066.300 612.600 l1.4 -1.4 M1071.700 612.600 l-1.4 -1.4" stroke="#8a8a8a" stroke-width=".7"/>
</svg>
</div>
<div class="a" id="deskbottom"></div>
<div class="a" style="left:0;top:618.7px;width:368px;height:1.3px;background:linear-gradient(to right,#8c767e,#806068)"></div>
</body>
</html>
